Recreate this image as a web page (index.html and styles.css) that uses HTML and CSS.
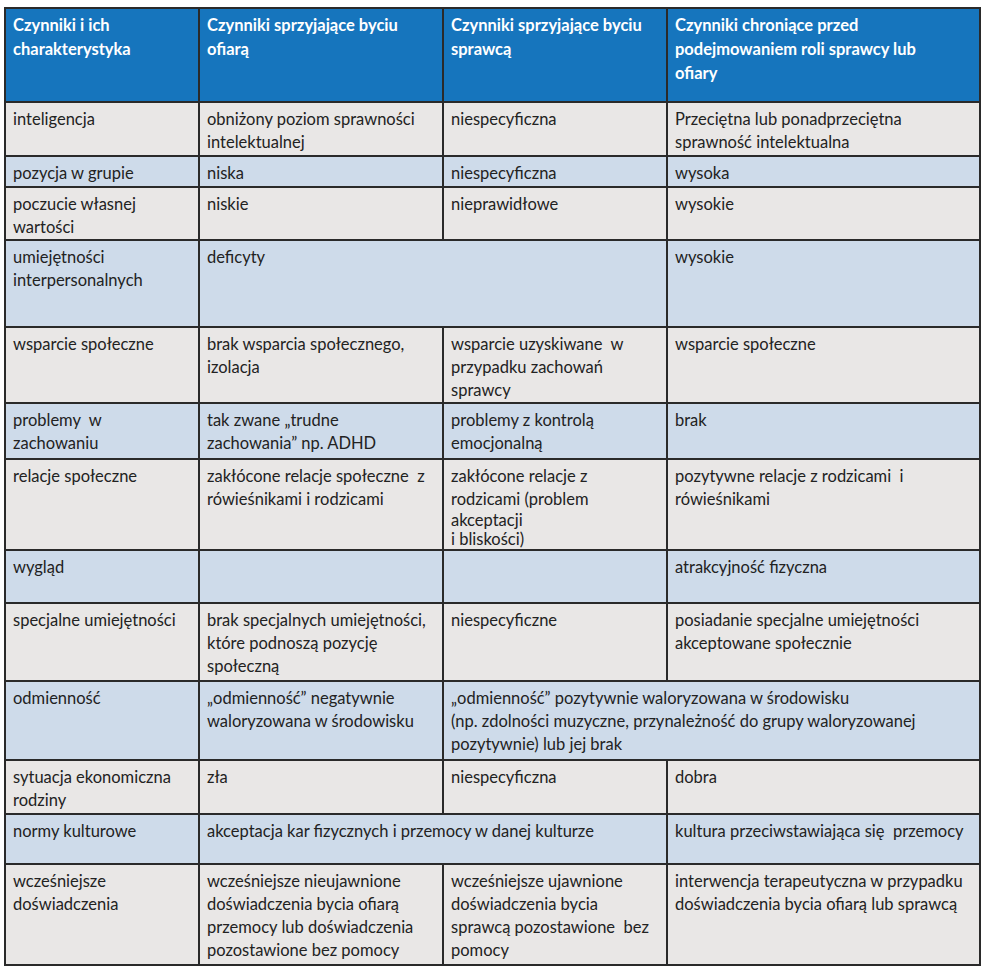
FILE: index.html
```html
<!DOCTYPE html>
<html lang="pl">
<head>
<meta charset="utf-8">
<title>Czynniki</title>
<link rel="stylesheet" href="styles.css">
</head>
<body>
<table class="grid">
  <colgroup>
    <col class="c1"><col class="c2"><col class="c3"><col class="c4">
  </colgroup>
  <thead>
    <tr class="r-head">
      <th>Czynniki i ich charakterystyka</th>
      <th>Czynniki sprzyjające byciu ofiarą</th>
      <th>Czynniki sprzyjające byciu sprawcą</th>
      <th>Czynniki chroniące przed podejmowaniem roli sprawcy lub<br>ofiary</th>
    </tr>
  </thead>
  <tbody>
    <tr class="gray h54">
      <td>inteligencja</td>
      <td>obniżony poziom sprawności intelektualnej</td>
      <td>niespecyficzna</td>
      <td>Przeciętna lub ponadprzeciętna sprawność intelektualna</td>
    </tr>
    <tr class="blue h31">
      <td>pozycja w grupie</td>
      <td>niska</td>
      <td>niespecyficzna</td>
      <td>wysoka</td>
    </tr>
    <tr class="gray h52">
      <td>poczucie własnej wartości</td>
      <td>niskie</td>
      <td>nieprawidłowe</td>
      <td>wysokie</td>
    </tr>
    <tr class="blue h87">
      <td>umiejętności interpersonalnych</td>
      <td colspan="2">deficyty</td>
      <td>wysokie</td>
    </tr>
    <tr class="gray h76">
      <td>wsparcie społeczne</td>
      <td>brak wsparcia społecznego, izolacja</td>
      <td>wsparcie uzyskiwane&nbsp; w przypadku zachowań sprawcy</td>
      <td>wsparcie społeczne</td>
    </tr>
    <tr class="blue h56">
      <td>problemy&nbsp; w<br>zachowaniu</td>
      <td>tak zwane „trudne<br>zachowania” np. ADHD</td>
      <td>problemy z kontrolą emocjonalną</td>
      <td>brak</td>
    </tr>
    <tr class="gray h91">
      <td>relacje społeczne</td>
      <td>zakłócone relacje społeczne&nbsp; z rówieśnikami i rodzicami</td>
      <td>zakłócone relacje z rodzicami (problem<span class="tight">akceptacji<br>i bliskości)</span></td>
      <td>pozytywne relacje z rodzicami&nbsp; i rówieśnikami</td>
    </tr>
    <tr class="blue h53">
      <td>wygląd</td>
      <td></td>
      <td></td>
      <td>atrakcyjność fizyczna</td>
    </tr>
    <tr class="gray h78">
      <td>specjalne umiejętności</td>
      <td>brak specjalnych umiejętności, które podnoszą pozycję społeczną</td>
      <td>niespecyficzne</td>
      <td>posiadanie specjalne umiejętności akceptowane społecznie</td>
    </tr>
    <tr class="blue h79">
      <td>odmienność</td>
      <td>„odmienność” negatywnie waloryzowana w środowisku</td>
      <td colspan="2">„odmienność” pozytywnie waloryzowana w środowisku<br>(np. zdolności muzyczne, przynależność do grupy waloryzowanej pozytywnie) lub jej brak</td>
    </tr>
    <tr class="gray h54">
      <td>sytuacja ekonomiczna rodziny</td>
      <td>zła</td>
      <td>niespecyficzna</td>
      <td>dobra</td>
    </tr>
    <tr class="blue h50">
      <td>normy kulturowe</td>
      <td colspan="2">akceptacja kar fizycznych i przemocy w danej kulturze</td>
      <td>kultura przeciwstawiająca się&nbsp; przemocy</td>
    </tr>
    <tr class="gray h101">
      <td>wcześniejsze doświadczenia</td>
      <td>wcześniejsze nieujawnione doświadczenia bycia ofiarą przemocy lub doświadczenia pozostawione bez pomocy</td>
      <td>wcześniejsze ujawnione doświadczenia bycia sprawcą pozostawione&nbsp; bez pomocy</td>
      <td>interwencja terapeutyczna w przypadku doświadczenia bycia ofiarą lub sprawcą</td>
    </tr>
  </tbody>
</table>
</body>
</html>
```
FILE: styles.css
```css
html, body {
  margin: 0;
  padding: 0;
  background: #ffffff;
}

body {
  padding: 7px 0 0 4px;
  font-family: Lato, "Open Sans", "Liberation Sans", sans-serif;
  font-size: 16.5px;
  color: #222222;
}

.grid {
  border-collapse: collapse;
  table-layout: fixed;
  width: 975px;
}

.c1 { width: 194px; }
.c2 { width: 244px; }
.c3 { width: 224px; }
.c4 { width: 313px; }

.grid th,
.grid td {
  border: 2px solid #2a2a2a;
  vertical-align: top;
  text-align: left;
  padding: 5px 7px 0 7px;
  line-height: 23px;
}

.grid th {
  background: #1675bd;
  color: #ffffff;
  font-weight: bold;
  line-height: 24px;
  padding-top: 4px;
}

.tight {
  display: block;
  line-height: 19px;
}

.r-head { height: 94px; }

.gray td { background: #e9e7e6; }
.blue td { background: #cedbea; }

.h31 { height: 31px; }
.h50 { height: 50px; }
.h52 { height: 52px; }
.h53 { height: 53px; }
.h54 { height: 54px; }
.h56 { height: 56px; }
.h76 { height: 76px; }
.h78 { height: 78px; }
.h79 { height: 79px; }
.h87 { height: 87px; }
.h91 { height: 91px; }
.h101 { height: 101px; }
```
